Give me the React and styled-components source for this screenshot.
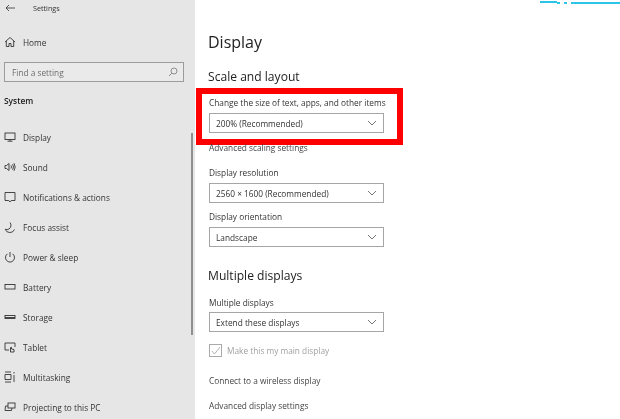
import styled, { createGlobalStyle } from 'styled-components'

const GlobalStyle = createGlobalStyle`
  html, body {
    margin: 0;
    padding: 0;
    height: 100%;
    background: #fff;
    overflow: hidden;
  }
  body {
    font-family: "Open Sans", "Noto Sans", "Liberation Sans", sans-serif;
    color: #222;
  }
`

const Window = styled.div`
  position: relative;
  display: flex;
  width: 620px;
  height: 419px;
  overflow: hidden;
  background: #fff;
  filter: blur(0.3px);
`

const Sidebar = styled.aside`
  position: relative;
  flex: none;
  width: 195px;
  height: 419px;
  background: #e6e6e6;
  overflow: hidden;
`

const TitleBar = styled.div`
  display: flex;
  align-items: center;
  height: 16px;
  padding-left: 5px;
  font-size: 7.2px;
  color: #333;
  svg { margin-right: 17px; }
`

const SearchBox = styled.div`
  display: flex;
  align-items: center;
  justify-content: space-between;
  box-sizing: border-box;
  width: 180px;
  height: 20px;
  margin: 0 0 0 4px;
  padding: 0 5px 0 7px;
  border: 1.5px solid #9c9c9c;
  background: #eaeaea;
  font-size: 8.3px;
  color: #6d6d6d;
`

const SectionTitle = styled.div`
  height: 12px;
  margin: 13px 0 15px 4px;
  font-size: 8.4px;
  line-height: 12px;
  font-weight: 600;
  color: #222;
`

const NavRow = styled.div`
  display: flex;
  align-items: center;
  height: 30px;
  padding-left: 4px;
  font-size: 8.3px;
  color: #333;
`

const HomeRow = styled(NavRow)`
  margin-top: 11px;
  height: 30px;
  margin-bottom: 5px;
`

const NavIcon = styled.svg`
  flex: none;
  width: 12px;
  height: 12px;
  margin-right: 7px;
  fill: none;
  stroke: #333;
  stroke-width: 0.9;
`

const ScrollThumb = styled.div`
  position: absolute;
  left: 191px;
  top: 133px;
  width: 2px;
  height: 202px;
  background: #8f8f8f;
`

const Main = styled.main`
  flex: 1;
  padding: 32px 0 0 14px;
`

const PageTitle = styled.h1`
  margin: 0 0 0 -1px;
  font-size: 16px;
  line-height: 21px;
  font-weight: 400;
  color: #222;
`

const Heading = styled.h2`
  margin: ${p => p.$top}px 0 0 -1px;
  font-size: 12.1px;
  line-height: 17px;
  font-weight: 400;
  color: #222;
`

const Label = styled.div`
  margin-top: ${p => p.$top || 0}px;
  font-size: 8.3px;
  line-height: 12px;
  color: #333;
`

const Highlight = styled.div`
  box-sizing: border-box;
  width: 207px;
  height: 57px;
  margin: 3px 0 0 -13px;
  padding: 3px 0 0 7px;
  border: 6px solid #f00;
`

const SelectBox = styled.div`
  display: flex;
  align-items: center;
  justify-content: space-between;
  box-sizing: border-box;
  width: 175px;
  height: 20px;
  margin-top: ${p => p.$top || 4}px;
  padding: 0 6px 0 6px;
  border: 1.5px solid #a6a6a6;
  background: #fff;
  font-size: 8.3px;
  color: #333;
`

const Chevron = () => (
  <svg width="10" height="6" viewBox="0 0 10 6" fill="none" stroke="#555" strokeWidth="0.8">
    <path d="M1 1l4 4 4-4" />
  </svg>
)

const LinkText = styled.div`
  margin-top: ${p => p.$top}px;
  font-size: 8.3px;
  line-height: 12px;
  color: #444;
`

const CheckRow = styled.div`
  display: flex;
  align-items: center;
  height: 14px;
  margin-top: 11px;
  font-size: 8.3px;
  color: #a0a0a0;
`

const CheckBox = styled.span`
  display: flex;
  align-items: center;
  justify-content: center;
  box-sizing: border-box;
  width: 13px;
  height: 13px;
  margin-right: 5px;
  border: 1.5px solid #aaa;
`

const TopEdge = styled.div`
  position: absolute;
  top: ${p => p.$top}px;
  left: ${p => p.$left}px;
  width: ${p => p.$width}px;
  height: 1.5px;
  background: #2cc5e8;
`

const icons = {
  display: <><rect x="1" y="2" width="10" height="6.5" /><path d="M6 8.5v1.5M3.5 10.2h5" /></>,
  sound: <><path d="M1 4.5h1.5L5 2.5v7L2.5 7.5H1z" /><path d="M7 4.5q1 1.5 0 3M8.6 3.2q1.8 2.800 0 5.600M10 2.200q2.400 3.800 0 7.600" /></>,
  notifications: <path d="M1 1.500h10v8H7.200L6 11 4.800 9.500H1z" />,
  focus: <path d="M6 1.500a4.500 4.500 0 0 1 -1 6.500q-1.800 1 -3.800 .3a5 5 0 0 0 9.300 .2" />,
  power: <><path d="M6 1v5" /><path d="M3.500 2.800a4.500 4.500 0 1 0 5 0" /></>,
  battery: <rect x="1" y="3.500" width="10" height="4.500" />,
  storage: <><rect x="1" y="4.500" width="10" height="3" /><path d="M1 6.500h10" /></>,
  tablet: <><path d="M5 9H1V2h10v4" /><path d="M6.500 11V6.500q1-1 1 0V8l2.500.500V11z" /></>,
  multitasking: <><path d="M1 1h6M1 11h6M1 3.500h6v5H1zM10 1v1.500M10 4v7" /></>,
  projecting: <><rect x="4" y="2" width="7" height="5" /><path d="M4 5H1.500L1 9.500h6.500L8 7" /></>,
}

const navItems = [
  ['display', 'Display'],
  ['sound', 'Sound'],
  ['notifications', 'Notifications & actions'],
  ['focus', 'Focus assist'],
  ['power', 'Power & sleep'],
  ['battery', 'Battery'],
  ['storage', 'Storage'],
  ['tablet', 'Tablet'],
  ['multitasking', 'Multitasking'],
  ['projecting', 'Projecting to this PC'],
]

const App = () => (
  <Window>
    <GlobalStyle />
    <Sidebar>
      <TitleBar>
        <svg width="11" height="8" viewBox="0 0 11 8" fill="none" stroke="#333" strokeWidth="0.8">
          <path d="M10 4H1M4 1L1 4l3 3" />
        </svg>
        Settings
      </TitleBar>
      <HomeRow>
        <NavIcon viewBox="0 0 12 12">
          <path d="M1 6l5-4.500L11 6M2.300 5v5.500h2.700V7.500h2v3h2.700V5" />
        </NavIcon>
        Home
      </HomeRow>
      <SearchBox>
        Find a setting
        <svg width="10" height="10" viewBox="0 0 10 10" fill="none" stroke="#777" strokeWidth="0.8">
          <circle cx="6" cy="4" r="3" />
          <path d="M3.800 6.200L1 9" />
        </svg>
      </SearchBox>
      <SectionTitle>System</SectionTitle>
      {navItems.map(([icon, label]) => (
        <NavRow key={label}>
          <NavIcon viewBox="0 0 12 12">{icons[icon]}</NavIcon>
          {label}
        </NavRow>
      ))}
      <ScrollThumb />
    </Sidebar>
    <Main>
      <PageTitle>Display</PageTitle>
      <Heading $top={15}>Scale and layout</Heading>
      <Highlight>
        <Label>Change the size of text, apps, and other items</Label>
        <SelectBox>
          200% (Recommended)
          <Chevron />
        </SelectBox>
      </Highlight>
      <LinkText $top={-3}>Advanced scaling settings</LinkText>
      <Label $top={13}>Display resolution</Label>
      <SelectBox>
        2560 × 1600 (Recommended)
        <Chevron />
      </SelectBox>
      <Label $top={8}>Display orientation</Label>
      <SelectBox>
        Landscape
        <Chevron />
      </SelectBox>
      <Heading $top={20}>Multiple displays</Heading>
      <Label $top={13}>Multiple displays</Label>
      <SelectBox $top={3}>
        Extend these displays
        <Chevron />
      </SelectBox>
      <CheckRow>
        <CheckBox>
          <svg width="10" height="9" viewBox="0 0 10 9" fill="none" stroke="#aaa" strokeWidth="0.9">
            <path d="M1 5l2.500 3L9 1" />
          </svg>
        </CheckBox>
        Make this my main display
      </CheckRow>
      <LinkText $top={18}>Connect to a wireless display</LinkText>
      <LinkText $top={13}>Advanced display settings</LinkText>
    </Main>
    <TopEdge $top={1} $left={540} $width={17} />
    <TopEdge $top={2} $left={557} $width={3} />
    <TopEdge $top={2} $left={564} $width={3} />
    <TopEdge $top={2} $left={571} $width={49} />
  </Window>
)

export default App
